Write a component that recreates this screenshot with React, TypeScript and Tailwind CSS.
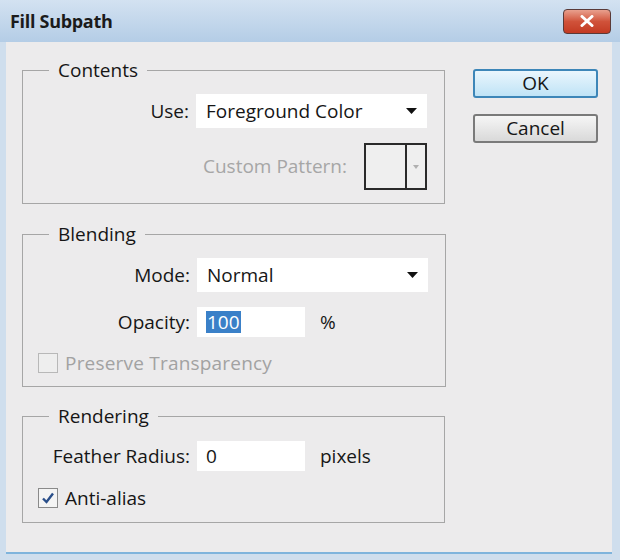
import React from 'react';

const font = { fontFamily: '"Open Sans", "Noto Sans", "Liberation Sans", sans-serif' };

function Arrow() {
  return (
    <svg width="11" height="6" viewBox="0 0 11 6" className="shrink-0">
      <path d="M0 0 H11 L5.5 6 Z" fill="#111" />
    </svg>
  );
}

function Select({ value }: { value: string }) {
  return (
    <div className="w-[231px] h-[34px] bg-white flex items-center justify-between pl-[10px] pr-[10px] text-[19px] text-[#161616]">
      <span>{value}</span>
      <Arrow />
    </div>
  );
}

function Field({ value, selected }: { value: string; selected?: boolean }) {
  return (
    <div className="w-[108px] h-[30px] bg-white flex items-center pl-[9px] text-[19px] text-[#161616]">
      {selected ? (
        <span className="bg-[#3a80c8] text-white leading-[22px] px-[1px]">{value}</span>
      ) : (
        <span>{value}</span>
      )}
    </div>
  );
}

function Check({ checked, disabled, label }: { checked?: boolean; disabled?: boolean; label: string }) {
  return (
    <div className="flex items-center gap-[7px] pl-[15px] h-[22px]">
      <div
        className={`w-[20px] h-[20px] border flex items-center justify-center ${
          disabled ? 'border-[#b8b8b8] bg-[#eeeeee]' : 'border-[#8a8a8a] bg-[#f4f4f4]'
        }`}
      >
        {checked && (
          <svg width="14" height="14" viewBox="0 0 14 14">
            <path d="M2 7.5 L5.5 11 L12 2.5" stroke="#2a4f8a" strokeWidth="2.4" fill="none" />
          </svg>
        )}
      </div>
      <span className={`text-[19px] ${disabled ? 'text-[#a2a2a2] tracking-[0.2px]' : 'text-[#161616]'}`}>{label}</span>
    </div>
  );
}

function Group({ title, children, className }: { title: string; children: React.ReactNode; className?: string }) {
  return (
    <fieldset className={`border border-[#a6a6a6] pr-[17px] ${className ?? ''}`}>
      <legend className="ml-[26px] px-[9px] text-[19px] leading-[24px] text-[#161616]">{title}</legend>
      {children}
    </fieldset>
  );
}

export default function App() {
  return (
    <div className="w-[620px] h-[560px] bg-[#cfdeed] flex flex-col overflow-hidden" style={font}>
      {/* title bar */}
      <div className="h-[42px] shrink-0 flex items-center justify-between pl-[10px] pr-[9px] bg-gradient-to-b from-[#d3e2f1] to-[#b4cde6]">
        <span className="text-[18px] font-bold text-[#1b1b1b] tracking-[-0.3px]">Fill Subpath</span>
        <div className="w-[48px] h-[25px] rounded-[4px] border border-[#5a3a38] bg-gradient-to-b from-[#e8a08e] via-[#d0523a] to-[#c33a22] flex items-center justify-center">
          <svg width="14" height="12" viewBox="0 0 14 12">
            <path d="M2 1.5 L12 10.5 M12 1.5 L2 10.5" stroke="#fff" strokeWidth="3" strokeLinecap="round" />
          </svg>
        </div>
      </div>

      {/* body */}
      <div className="flex-1 ml-[6px] mr-[8px] mb-[6px] bg-[#ecebec] border-b-2 border-[#7fb4dc] flex pl-[16px] pr-[14px] pt-[16px]">
        <div className="w-[423px] flex flex-col">
          <Group title="Contents" className="pb-[13px]">
            <div className="flex items-center justify-end gap-[7px] mt-[12px]">
              <span className="text-[19px] text-[#161616]">Use:</span>
              <Select value="Foreground Color" />
            </div>
            <div className="flex items-center justify-end gap-[17px] mt-[15px]">
              <span className="text-[19px] text-[#a6a6a6]">Custom Pattern:</span>
              <div className="w-[63px] h-[47px] border-2 border-[#2a2a2a] bg-[#efefef] flex">
                <div className="flex-1 border-r-2 border-[#2a2a2a]" />
                <div className="w-[18px] flex items-center justify-center">
                  <svg width="6" height="4" viewBox="0 0 6 4">
                    <path d="M0 0 H6 L3 4 Z" fill="#b0b0b0" />
                  </svg>
                </div>
              </div>
            </div>
          </Group>

          <Group title="Blending" className="mt-[18px] pb-[12px]">
            <div className="flex items-center gap-[7px] mt-[12px]">
              <span className="w-[167px] text-right text-[19px] text-[#161616]">Mode:</span>
              <Select value="Normal" />
            </div>
            <div className="flex items-center gap-[7px] mt-[15px] h-[30px]">
              <span className="w-[167px] text-right text-[19px] text-[#161616]">Opacity:</span>
              <Field value="100" selected />
              <span className="ml-[8px] text-[19px] text-[#161616]">%</span>
            </div>
            <div className="mt-[15px]">
              <Check disabled label="Preserve Transparency" />
            </div>
          </Group>

          <Group title="Rendering" className="mt-[17px] pb-[13px]">
            <div className="flex items-center gap-[7px] mt-[13px] h-[30px]">
              <span className="w-[167px] text-right text-[19px] text-[#161616]">Feather Radius:</span>
              <Field value="0" />
              <span className="ml-[8px] text-[19px] text-[#161616]">pixels</span>
            </div>
            <div className="mt-[16px]">
              <Check checked label="Anti-alias" />
            </div>
          </Group>
        </div>

        <div className="ml-[28px] pt-[11px] flex flex-col gap-[16px]">
          <button className="w-[125px] h-[29px] rounded-[3px] border-2 border-[#3d86b8] bg-gradient-to-b from-[#eaf6fd] to-[#bfe3f6] text-[19px] text-[#161616] flex items-center justify-center">
            OK
          </button>
          <button className="w-[125px] h-[29px] rounded-[3px] border-2 border-[#7a7a7a] bg-gradient-to-b from-[#f6f6f6] to-[#d9d9d9] text-[19px] text-[#161616] flex items-center justify-center">
            Cancel
          </button>
        </div>
      </div>
    </div>
  );
}
